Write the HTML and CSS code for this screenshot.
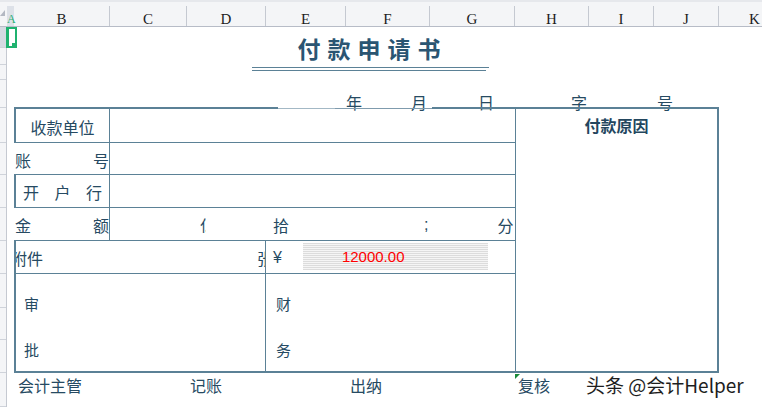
FILE: index.html
```html
<!DOCTYPE html>
<html lang="zh-CN">
<head>
    <meta charset="UTF-8">
    <meta name="viewport" content="width=device-width, initial-scale=1.0">
    <title>付款申请书</title>
    <link rel="stylesheet" href="styles.css">
</head>
<body>
<div class="sheet">
    <div class="col-head">
        <div class="corner"><i class="corner-tri"></i></div>
        <div class="ch ch-a">A</div>
        <div class="ch w-b">B</div>
        <div class="ch w-c">C</div>
        <div class="ch w-d">D</div>
        <div class="ch w-e">E</div>
        <div class="ch w-f">F</div>
        <div class="ch w-g">G</div>
        <div class="ch w-h">H</div>
        <div class="ch w-i">I</div>
        <div class="ch w-j">J</div>
        <div class="ch w-k">K</div>
    </div>

    <div class="sheet-body">
        <div class="rail">
            <div class="rh h21 sel"></div>
            <div class="rh h17"></div>
            <div class="rh h15"></div>
            <div class="rh h28"></div>
            <div class="rh h35"></div>
            <div class="rh h32"></div>
            <div class="rh h33"></div>
            <div class="rh h33"></div>
            <div class="rh h33"></div>
            <div class="rh h34"></div>
            <div class="rh h32"></div>
            <div class="rh h33"></div>
            <div class="rh h34"></div>
        </div>

        <div class="page">
            <div class="title-wrap">
                <div class="title">付款申请书</div>
                <div class="rule"></div>
                <div class="rule short"></div>
            </div>

            <div class="date-row">
                <span class="d-yr">年</span>
                <span class="d-mo">月</span>
                <span class="d-dy">日</span>
                <span class="d-zi">字</span>
                <span class="d-hao">号</span>
            </div>

            <div class="form">
                <div class="top-edge"><i class="e1"></i><i class="e2"></i><i class="e3"></i><i class="e4"></i></div>
                <div class="table">
                    <div class="reason">付款原因</div>

                    <div class="cell label boxed">收款单位</div>
                    <div class="cell wide"></div>

                    <div class="cell label spread"><span>账</span><span>号</span></div>
                    <div class="cell wide"></div>

                    <div class="cell label boxed spaced"><span>开</span><span>户</span><span>行</span></div>
                    <div class="cell wide"></div>

                    <div class="cell label spread"><span>金</span><span>额</span></div>
                    <div class="cell wide amount">
                        <span class="clip a1">亿</span>
                        <span class="a2">拾</span>
                        <span class="semi a3">;</span>
                        <span class="a4">分</span>
                    </div>

                    <div class="cell wide attach"><span class="att-l">附件</span><span class="att-r">张</span></div>
                    <div class="cell money">
                        <span class="yen">¥</span>
                        <div class="sum">12000.00</div>
                    </div>

                    <div class="cell wide sign sign-l"><span>审</span><span>批</span></div>
                    <div class="cell sign sign-r"><span>财</span><span>务</span></div>
                </div>
            </div>

            <div class="sign-row">
                <span>会计主管</span>
                <span class="s-ji">记账</span>
                <span class="s-chu">出纳</span>
                <span class="s-fu">复核</span>
                <span class="mark">头条 @会计Helper</span>
            </div>
        </div>
    </div>

    <div class="cursor"><i class="handle"></i></div>
</div>
</body>
</html>
```

FILE: styles.css
```css
body { margin: 0; background: #fff; font-family: "Noto Sans CJK SC", "Noto Sans", sans-serif; color: #264a62; }
.sheet { position: relative; width: 762px; height: 407px; overflow: hidden; background: #fff; }

/* column letters */
.col-head { display: flex; align-items: flex-end; height: 27px; box-sizing: border-box; background: #f4f5f7; border-top: 2px solid #e6e8ec; border-bottom: 1px solid #b7bcc7; }
.ch { flex: none; height: 20px; box-sizing: border-box; border-right: 1px solid #c5c9d1; font: 15px/26px "Liberation Serif", serif; color: #1c1c1c; text-align: center; white-space: nowrap; }
.corner { flex: none; width: 7px; height: 20px; position: relative; }
.corner-tri { position: absolute; left: 0; top: 4px; width: 0; height: 0; border-left: 5px solid transparent; border-bottom: 6px solid #b3b8c2; }
.ch-a { width: 7px; background: #dde1e8; color: #1fae74; font-size: 12px; text-align: left; border-right: none; }
.w-b { width: 96px; }
.w-c { width: 77px; }
.w-d { width: 79px; }
.w-e { width: 80px; }
.w-f { width: 84px; }
.w-g { width: 85px; }
.w-h { width: 74px; }
.w-i { width: 65px; }
.w-j { width: 65px; }
.w-k { width: 72px; }

/* row headers */
.sheet-body { display: flex; }
.rail { flex: none; width: 7px; background: #f4f5f7; border-right: 1px solid #c5c9d1; box-sizing: border-box; }
.rh { border-bottom: 1px solid #cfd3da; box-sizing: border-box; }
.rh.sel { background: #d5dae2; }
.h15 { height: 15px; }
.h17 { height: 17px; }
.h21 { height: 21px; }
.h28 { height: 28px; }
.h32 { height: 32px; }
.h33 { height: 33px; }
.h34 { height: 34px; }
.h35 { height: 35px; }

.page { flex: 1; }

/* title */
.title-wrap { margin-left: 245px; width: 237px; height: 53px; padding-top: 7px; box-sizing: border-box; }
.title { font-size: 23px; font-weight: bold; line-height: 28px; letter-spacing: 7px; text-align: center; padding-left: 4px; color: #2b5572; }
.rule { height: 1px; background: #5b8196; margin-top: 5px; }
.rule.short { width: 234px; margin-top: 2px; }

.date-row { display: flex; height: 27px; box-sizing: border-box; padding: 14px 0 0 339px; font-size: 16px; line-height: 16px; }
.d-mo { margin-left: 49px; }
.d-dy { margin-left: 51px; }
.d-zi { margin-left: 77px; }
.d-hao { margin-left: 70px; }

/* form table */
.form { margin-left: 7px; width: 705px; }
.top-edge { display: flex; height: 2px; }
.top-edge i { display: block; }
.e1 { width: 264px; height: 2px; background: #5b8196; }
.e2 { width: 57px; height: 1px; margin-top: 1px; background: #a3b8c5; }
.e3 { width: 97px; height: 1px; margin-top: 1px; background: #7f9bad; }
.e4 { flex: 1; height: 2px; background: #5b8196; }

.table { display: grid; grid-template-columns: 96px 156px 249px 204px; grid-template-rows: 34px 32px 33px 33px 33px 99px; font-size: 16px; line-height: 16px; }
.cell { box-sizing: border-box; border-bottom: 1px solid #5b8196; display: flex; align-items: center; padding-top: 2px; overflow: hidden; white-space: nowrap; }
.wide { grid-column: span 2; }
.label { border-right: 1px solid #5b8196; }
.boxed { border-left: 2px solid #5b8196; justify-content: center; }
.spread { justify-content: space-between; padding-left: 1px; }
.spaced { justify-content: space-between; padding: 2px 7px 0; }

.reason { grid-column: 4; grid-row: 1 / 7; box-sizing: border-box; border-left: 1px solid #5b8196; border-right: 2px solid #5b8196; border-bottom: 2px solid #5b8196; padding-top: 8px; text-align: center; font-weight: bold; color: #23465e; }

.amount { padding-left: 0; }
.clip { display: inline-block; width: 6px; overflow: hidden; }
.a1 { margin-left: 90px; }
.a2 { margin-left: 67px; }
.a3 { margin-left: 135px; }
.a4 { margin-left: 69px; }
.semi { font-family: "Liberation Sans", sans-serif; }

.attach { border-left: 2px solid #5b8196; border-right: 1px solid #5b8196; justify-content: space-between; }
.att-l { margin-left: -5px; }
.att-r { margin-right: -8px; }

.money { padding-left: 7px; }
.yen { font-family: "Liberation Sans", sans-serif; }
.sum { align-self: flex-start; margin: 0 0 0 21px; width: 185px; height: 27px; box-sizing: border-box; padding-left: 39px; background: repeating-linear-gradient(to bottom, #dcdcdc 0 1px, #f5f5f5 1px 2px); font: 15px/27px "Liberation Sans", sans-serif; color: #ff0000; }

.sign { flex-direction: column; align-items: flex-start; gap: 31px; padding: 22px 0 0 10px; border-bottom-width: 2px; font-size: 15px; line-height: 15px; }
.sign-l { border-left: 2px solid #5b8196; border-right: 1px solid #5b8196; padding-left: 8px; }

/* signatures */
.sign-row { display: flex; align-items: flex-start; padding: 4px 0 0 11px; font-size: 16px; line-height: 16px; white-space: nowrap; }
.s-ji { margin-left: 108px; }
.s-chu { margin-left: 128px; }
.s-fu { margin-left: 136px; position: relative; }
.s-fu::before { content: ""; position: absolute; left: -3px; top: -3px; width: 0; height: 0; border-top: 5px solid #1a8a3a; border-right: 5px solid transparent; }
.mark { margin-left: 36px; font-size: 19px; color: #1e1e1e; text-shadow: 0 0 1px #fff, 0 0 2px #fff; }

/* selected cell A1 */
.cursor { position: absolute; left: 6px; top: 27px; width: 11px; height: 21px; box-sizing: border-box; border: 2px solid #1fb26f; border-left-width: 3px; }
.handle { position: absolute; right: -2px; bottom: -2px; width: 5px; height: 5px; background: #1fb26f; }
```
